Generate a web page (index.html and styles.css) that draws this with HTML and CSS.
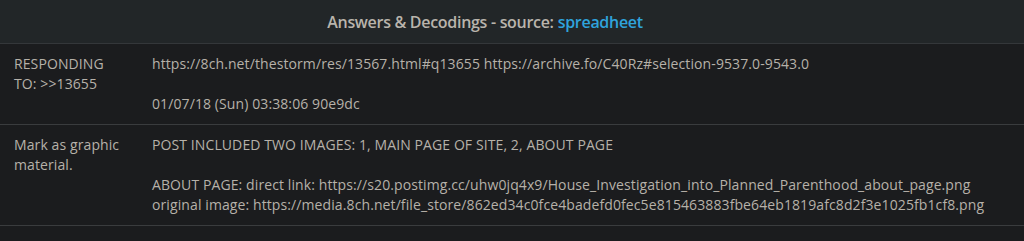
FILE: index.html
```html
<!DOCTYPE html>
<html>
<head>
<meta charset="utf-8">
<link rel="stylesheet" href="styles.css">
</head>
<body>
<div class="panel">
  <div class="header">Answers &amp; Decodings - source: <a class="link" href="#">spreadheet</a></div>
  <div class="row">
    <div class="label">RESPONDING TO: &gt;&gt;13655</div>
    <div class="content">
      <p>https://8ch.net/thestorm/res/13567.html#q13655 https://archive.fo/C40Rz#selection-9537.0-9543.0</p>
      <p>01/07/18 (Sun) 03:38:06 90e9dc</p>
    </div>
  </div>
  <div class="row">
    <div class="label">Mark as graphic material.</div>
    <div class="content">
      <p>POST INCLUDED TWO IMAGES: 1, MAIN PAGE OF SITE, 2, ABOUT PAGE</p>
      <p>ABOUT PAGE: direct link: https://s20.postimg.cc/uhw0jq4x9/House_Investigation_into_Planned_Parenthood_about_page.png<br>original image: https://media.8ch.net/file_store/862ed34c0fce4badefd0fec5e815463883fbe64eb1819afc8d2f3e1025fb1cf8.png</p>
    </div>
  </div>
</div>
</body>
</html>
```
FILE: styles.css
```css
html, body {
  margin: 0;
  padding: 0;
  background: #1b1c1e;
}
body {
  font-family: "Open Sans", "DejaVu Sans", sans-serif;
  color: #b6b1a9;
  font-size: 14px;
  line-height: 20px;
  letter-spacing: 0.1px;
}
.header {
  height: 43px;
  display: flex;
  align-items: center;
  justify-content: center;
  padding-right: 54px;
  background: #222628;
  border-bottom: 1px solid #34373a;
  font-size: 16px;
  font-weight: 600;
  color: #b9b4ac;
  letter-spacing: -0.3px;
}
.link {
  color: #2fa3dc;
  text-decoration: none;
  margin-left: 4px;
}
.row {
  display: grid;
  grid-template-columns: 138px 1fr;
  padding: 10px 0 10px 14px;
  border-bottom: 1px solid #3a3c3e;
}
.label {
  padding-right: 24px;
}
.content p {
  margin: 0 0 20px 0;
}
.content p:last-child {
  margin-bottom: 0;
}
```
